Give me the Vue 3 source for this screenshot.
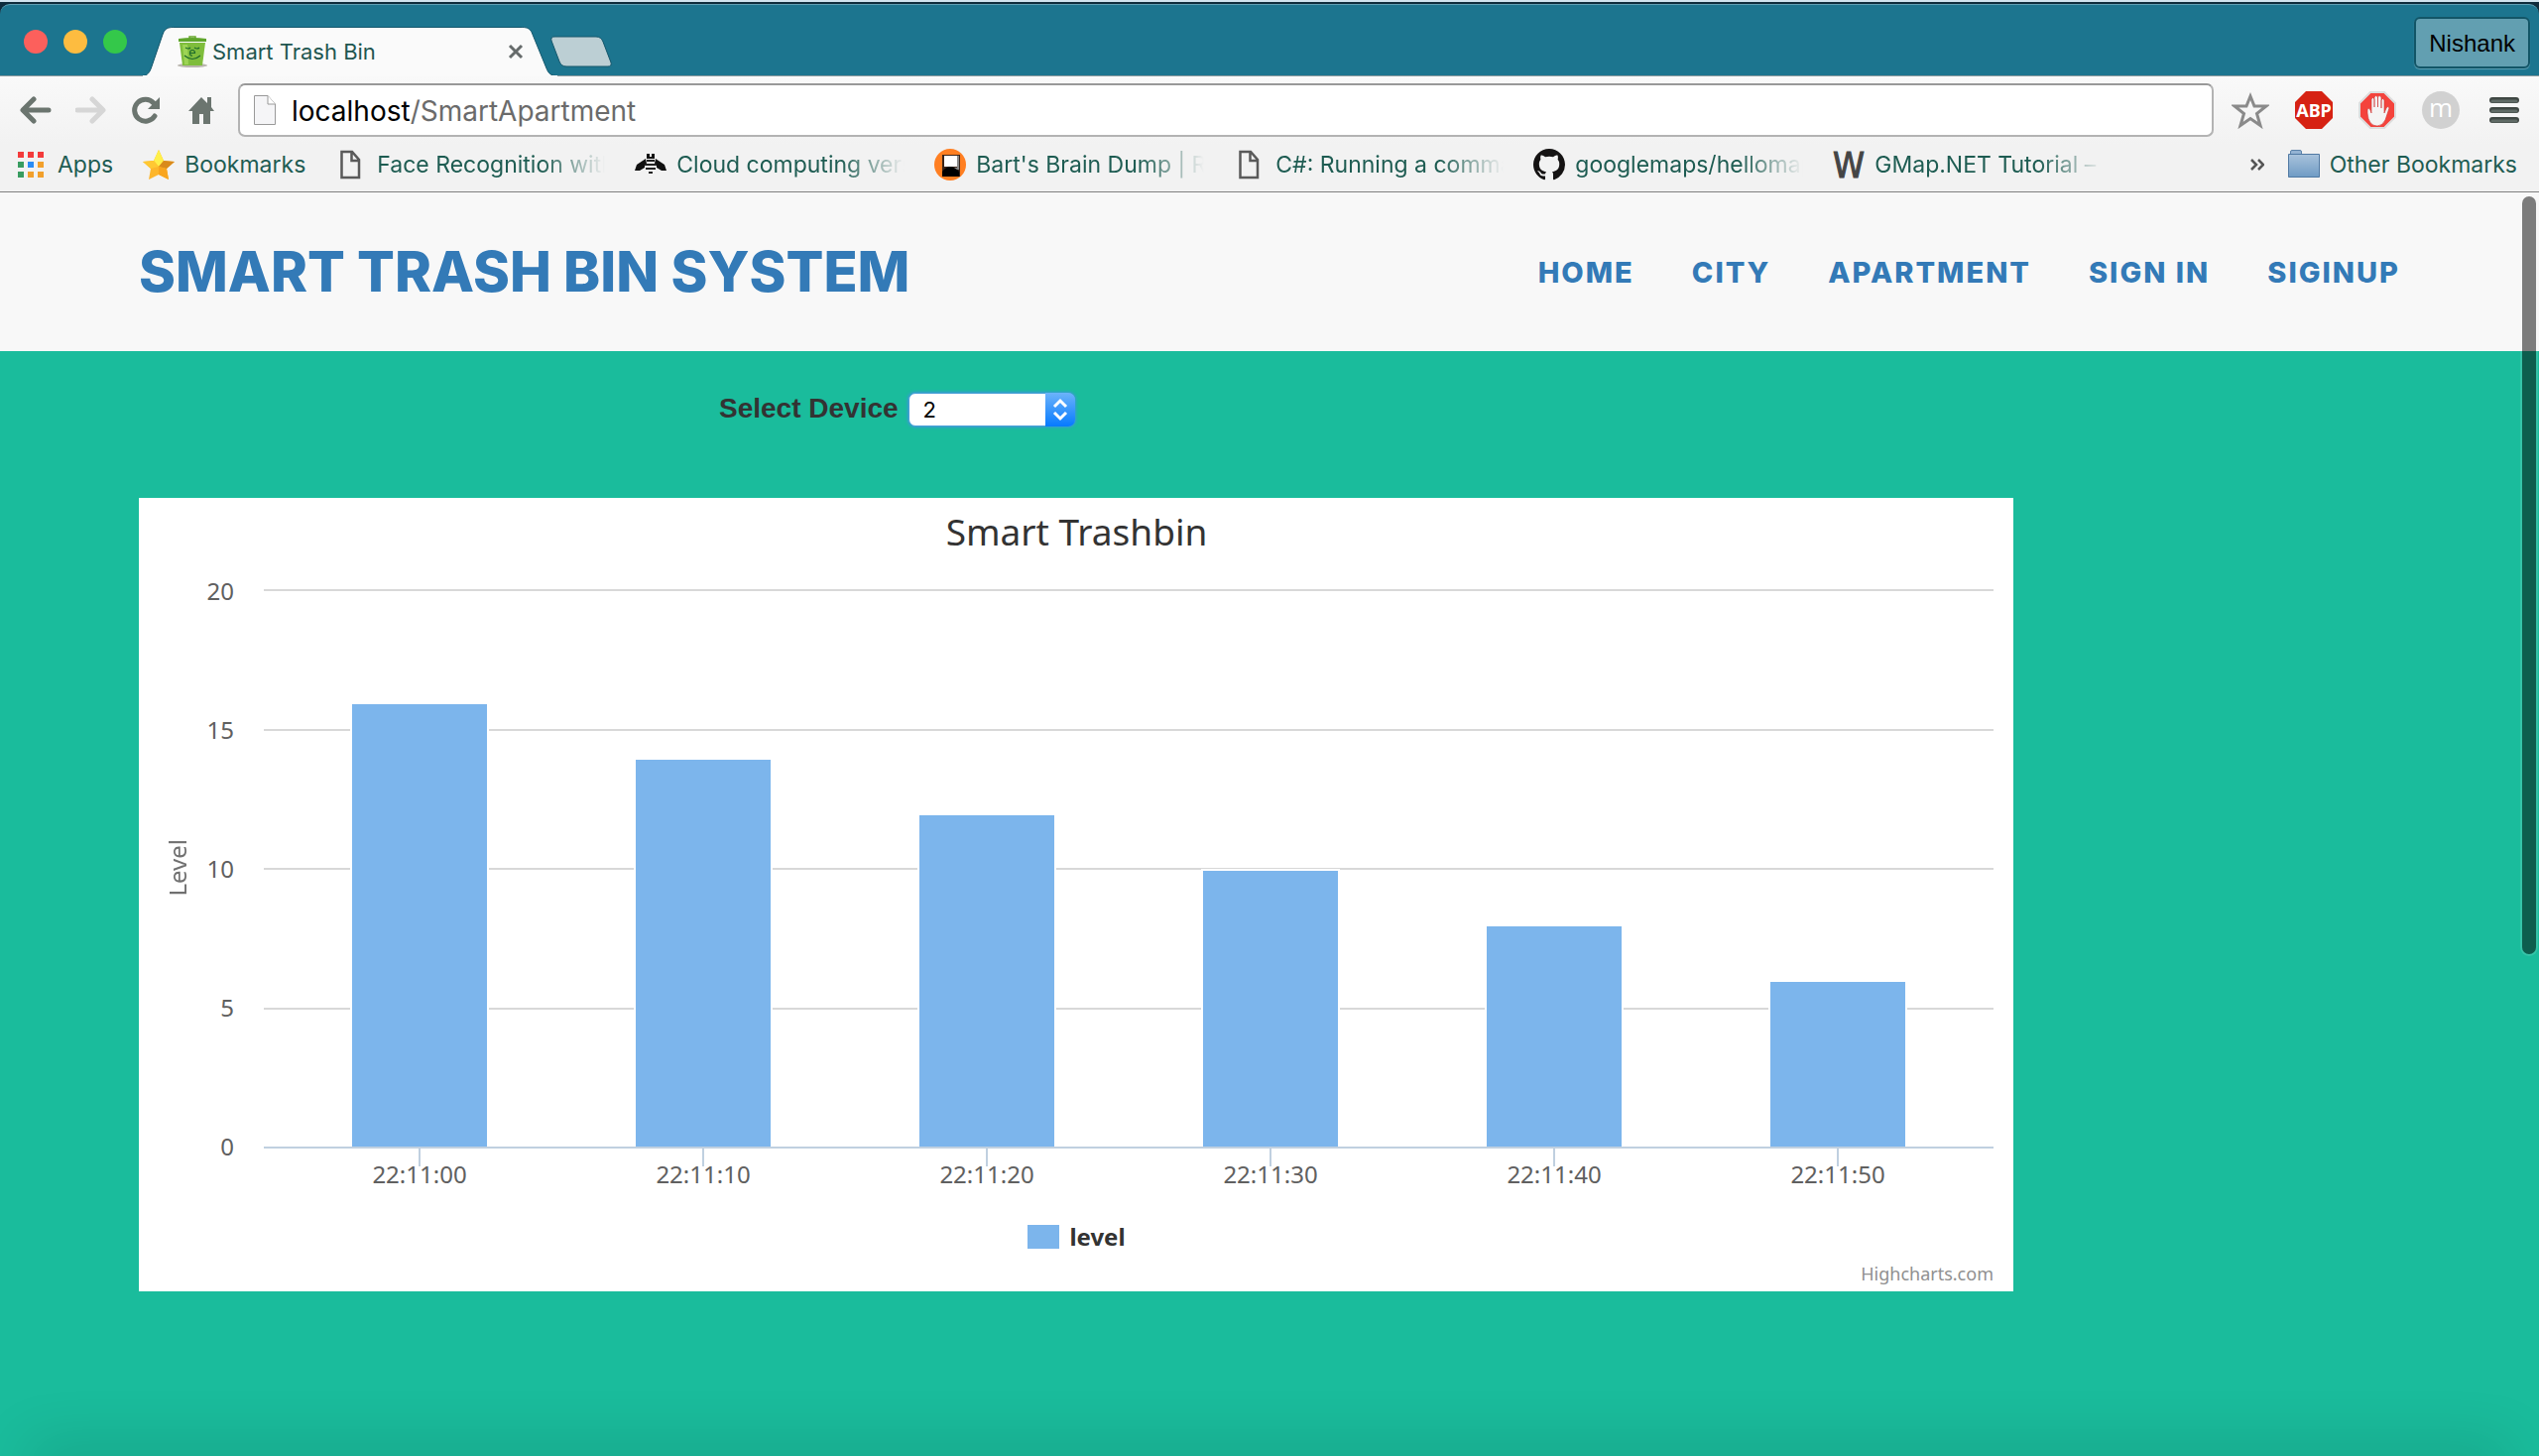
<script setup>
import { ref } from 'vue'

const device = ref('2')
const address = ref('localhost/SmartApartment')

const links = ['Home', 'City', 'Apartment', 'Sign in', 'Siginup']

const bookmarks = [
  { icon: 'apps', label: 'Apps' },
  { icon: 'star', label: 'Bookmarks' },
  { icon: 'file', label: 'Face Recognition with', clipped: true },
  { icon: 'bee', label: 'Cloud computing vers', clipped: true },
  { icon: 'bart', label: "Bart's Brain Dump | R", clipped: true },
  { icon: 'file', label: 'C#: Running a comma', clipped: true },
  { icon: 'github', label: 'googlemaps/hellomap', clipped: true },
  { icon: 'w', label: 'GMap.NET Tutorial –', clipped: true },
]

const appColors = ['#f33b3b', '#f33b3b', '#f33b3b', '#389c60', '#2a8cf5', '#f2a02c', '#389c60', '#f2a02c', '#f2a02c']

const maxLevel = 20
const ticks = [20, 15, 10, 5, 0]
const readings = [
  { time: '22:11:00', level: 16 },
  { time: '22:11:10', level: 14 },
  { time: '22:11:20', level: 12 },
  { time: '22:11:30', level: 10 },
  { time: '22:11:40', level: 8 },
  { time: '22:11:50', level: 6 },
]
</script>

<template>
  <div class="window">
    <div class="edge"></div>
    <div class="titlebar">
      <div class="lights"><i class="red"></i><i class="amber"></i><i class="green"></i></div>
      <div class="tab">
        <svg class="tab-shape" viewBox="0 0 420 50" preserveAspectRatio="none" aria-hidden="true">
          <path d="M0 49.500C5 49 7 46 9 40L20 8C22 2 25 .5 31 .5H384C390 .5 393 2 395 8L409 42C411 47 413 49 419 49.500Z" fill="#fafafa" stroke="#14566b" />
          <path d="M0 50H420" stroke="#fafafa" stroke-width="2" />
        </svg>
        <svg class="favicon" viewBox="0 0 32 32" aria-hidden="true">
          <ellipse cx="16" cy="30" rx="15" ry="2" fill="#b9b5ae" />
          <path d="M13 1h6v3h-6z" fill="none" stroke="#68a82c" stroke-width="1.500" />
          <path d="M3 7h26l-3 23H6z" fill="#7fbd3c" />
          <path d="M6 9h5l1 20H8z" fill="#9dd455" />
          <path d="M2 3q14-2 28 0v3H2z" fill="#5fa52b" />
          <path d="M9 12q3 2 5 0M18 12q3 2 5 0M8 20q8 7 16 0M13.500 17.500h5q0-3-2.500-3t-2.500 3 2.500 2.500" fill="none" stroke="#1e6a2c" stroke-width="1.200" />
        </svg>
        <span class="tab-title">Smart Trash Bin</span>
        <button class="close" aria-label="Close tab">
          <svg viewBox="0 0 16 16" width="16" height="16"><path d="M2 2l12 12M14 2L2 14" stroke="#666b6b" stroke-width="3" /></svg>
        </button>
      </div>
      <button class="newtab" aria-label="New tab">
        <svg viewBox="0 0 64 32" width="64" height="32"><path d="M5 1H47Q52 1 54 6L62 27Q63 31 59 31H17Q12 31 10 26L2 5Q1 1 5 1Z" fill="#bccfd4" stroke="#14566b" /></svg>
      </button>
      <button class="profile">Nishank</button>
    </div>

    <div class="toolbar">
      <div class="nav-row">
        <div class="nav-buttons">
          <button aria-label="Back"><svg viewBox="0 0 32 28"><path d="M29 14H4M14 3L3 14 14 25" class="stroke" /></svg></button>
          <button aria-label="Forward"><svg viewBox="0 0 32 28"><path d="M2 14H27M17 3L28 14 17 25" class="stroke off" /></svg></button>
          <button aria-label="Reload"><svg viewBox="0 0 32 28"><path d="M24 20A11 11 0 1 1 23 7" fill="none" stroke="#6b756f" stroke-width="5" stroke-linecap="round" /><path d="M29 1V13H17Z" fill="#6b756f" /></svg></button>
          <button aria-label="Home"><svg viewBox="0 0 32 28"><path d="M15 1L2 15H6V28H13V18H17V28H24V15H28L25 11V1H21V7Z" fill="#6b756f" /></svg></button>
        </div>
        <div class="address">
          <svg class="address-icon" viewBox="0 0 22 30" aria-hidden="true"><path d="M.5 .5H14L21.500 9V29.500H.5Z" fill="#f5f5f7" stroke="#999" /><path d="M14 .5V9H21.500" fill="#fff" stroke="#999" /></svg>
          <div class="address-text">
            <input id="address" v-model="address" aria-label="Address" spellcheck="false">
            <span aria-hidden="true"><b>localhost</b>/SmartApartment</span>
          </div>
        </div>
        <div class="extensions">
          <button aria-label="Bookmark this page"><svg viewBox="0 0 38 38"><path d="M19 5L23 15H35L25.500 22.500 29 34.500 19 27.500 9 34.500 12.500 22.500 3 15H15Z" fill="none" stroke="#8a8a8a" stroke-width="3" /></svg></button>
          <button aria-label="Adblock Plus"><svg viewBox="0 0 38 38"><path d="M11 0H27L38 11V27L27 38H11L0 27V11Z" fill="#d62213" /><text x="19" y="26" text-anchor="middle" class="abp">ABP</text></svg></button>
          <button aria-label="AdBlock">
            <svg viewBox="0 0 38 38"><path d="M12 1H26L37 12V26L26 37H12L1 26V12Z" fill="#f4433c" stroke="#ddd" stroke-width="2" /><path d="M9 18q2-2 3 1l1 3V8q1.500-3 3 0v8V6q1.500-3 3.500 0v10V6q1.500-3 3.500 0v11V9q1.500-3 3 0v13l2-5q2-3 3 0l-4 12q-3 6-8 6-9 0-10-13z" fill="#f4f4f4" stroke="#c33" stroke-width=".6" /></svg>
          </button>
          <button aria-label="m"><svg viewBox="0 0 38 38"><circle cx="19" cy="19" r="19" fill="#d1d1d1" /><text x="19" y="26" text-anchor="middle" class="em">m</text></svg></button>
          <button aria-label="Menu"><svg viewBox="0 0 38 38"><path d="M7 9H31M7 19H31M7 29H31" stroke="#3f4743" stroke-width="6" stroke-linecap="round" /><path d="M7 10H31M7 20H31M7 30H31" stroke="#606b66" stroke-width="3" stroke-linecap="round" /></svg></button>
        </div>
      </div>

      <nav class="bookmarks" aria-label="Bookmarks bar">
        <a v-for="item in bookmarks" :key="item.label" href="#" class="bookmark">
          <svg v-if="item.icon === 'apps'" class="apps-icon" viewBox="0 0 26 26">
            <rect v-for="(color, i) in appColors" :key="i" :x="(i % 3) * 10" :y="Math.floor(i / 3) * 10" width="6" height="6" :fill="color" />
          </svg>
          <svg v-else-if="item.icon === 'star'" viewBox="0 0 32 32">
            <path d="M16 1L21 12 32 13 24 20 26 31 16 26 6 31 8 20 0 13 11 12Z" fill="#fdb62c" />
            <path d="M16 1L21 12 16 18 11 12Z" fill="#fff04a" /><path d="M0 13L11 12 16 18 8 20Z" fill="#ffc833" /><path d="M32 13L24 20 16 18 21 12Z" fill="#d98a1c" /><path d="M16 18L24 20 26 31 16 26Z" fill="#f9a51f" />
          </svg>
          <svg v-else-if="item.icon === 'file'" viewBox="0 0 32 32"><path d="M6.500 3H17L24 11V29H6.500ZM16.500 3V12H24" fill="none" stroke="#5a5a5a" stroke-width="2.500" /></svg>
          <svg v-else-if="item.icon === 'bee'" viewBox="0 0 32 32">
            <path d="M12 5h3v3h2V5h3v5h-8z" fill="#111" />
            <path d="M11 10L2 16 0 22H5L10 19V15H12ZM21 10L30 16 32 22H27L22 19V15H20Z" fill="#111" />
            <path d="M12 12H20M10 16H22M11 20H21M14 24H18" stroke="#222" stroke-width="2" />
          </svg>
          <svg v-else-if="item.icon === 'bart'" viewBox="0 0 32 32">
            <circle cx="16" cy="16" r="16" fill="#ff7f22" /><path d="M8 6H26V28H8Z" fill="#3a2418" /><rect x="10" y="7" width="14" height="11" fill="#fff" /><path d="M24 7V20H19" fill="none" stroke="#888" stroke-width="2" /><path d="M8 28V23Q12 18 16 18T25 23V28Z" fill="#000" />
          </svg>
          <svg v-else-if="item.icon === 'github'" viewBox="0 0 16 16">
            <path fill="#151313" d="M8 0C3.580 0 0 3.580 0 8c0 3.540 2.290 6.530 5.470 7.590.4.070.55-.17.55-.38 0-.19-.01-.82-.01-1.490-2.010.37-2.530-.49-2.690-.94-.09-.23-.48-.94-.82-1.130-.28-.15-.68-.52-.01-.53.63-.01 1.080.58 1.230.82.72 1.210 1.870.87 2.330.66.07-.52.28-.87.51-1.070-1.780-.2-3.640-.89-3.640-3.950 0-.87.31-1.590.82-2.150-.08-.2-.36-1.020.08-2.120 0 0 .67-.21 2.200.82.64-.18 1.320-.27 2-.27s1.360.09 2 .27c1.530-1.040 2.200-.82 2.200-.82.44 1.100.16 1.920.08 2.120.51.56.82 1.270.82 2.150 0 3.070-1.870 3.750-3.650 3.950.29.25.54.73.54 1.480 0 1.070-.01 1.930-.01 2.200 0 .21.15.46.55.38A8.010 8.010 0 0 0 16 8c0-4.420-3.580-8-8-8z" />
          </svg>
          <svg v-else viewBox="0 0 32 32"><text x="16" y="29" text-anchor="middle" class="w-mark">W</text></svg>
          <span :class="{ clipped: item.clipped }">{{ item.label }}</span>
        </a>
        <button class="more" aria-label="More bookmarks"><svg viewBox="0 0 14 12" width="14" height="12"><path d="M1 1L6 6 1 11M8 1L13 6 8 11" fill="none" stroke="#555" stroke-width="2.500" /></svg></button>
        <a href="#" class="bookmark">
          <svg viewBox="0 0 32 32">
            <defs><linearGradient id="folder" x1="0" y1="0" x2="0" y2="1"><stop offset="0" stop-color="#a9c3dc" /><stop offset="1" stop-color="#6f9bc4" /></linearGradient></defs>
            <path d="M2.500 6V3Q2.500 1.500 4 1.500H12Q13.500 1.500 13.500 3V6" fill="#94b3d3" stroke="#5c83aa" /><path d="M.5 5.500H31.500V28.500H.5Z" fill="url(#folder)" stroke="#5079a3" />
          </svg>
          <span>Other Bookmarks</span>
        </a>
      </nav>
    </div>

    <main class="page">
      <header class="site-header">
        <a class="brand" href="#">Smart Trash Bin System</a>
        <nav class="site-nav" aria-label="Main">
          <a v-for="link in links" :key="link" href="#">{{ link }}</a>
        </nav>
      </header>

      <section class="content">
        <div class="device">
          <label for="device">Select Device</label>
          <div class="select">
            <select id="device" v-model="device">
              <option>1</option>
              <option>2</option>
              <option>3</option>
            </select>
            <svg viewBox="0 0 30 34" aria-hidden="true"><path d="M9 14L15 8 21 14M9 20L15 26 21 20" fill="none" stroke="#fff" stroke-width="3" /></svg>
          </div>
        </div>

        <figure class="chart">
          <figcaption>Smart Trashbin</figcaption>
          <div class="chart-body">
            <div class="axis-title"><span>Level</span></div>
            <div class="scale"><span v-for="tick in ticks" :key="tick">{{ tick }}</span></div>
            <div class="plot">
              <div class="grid"><i v-for="tick in ticks" :key="tick"></i></div>
              <div class="bars">
                <div v-for="r in readings" :key="r.time" class="slot">
                  <div class="bar" :style="{ height: (r.level / maxLevel) * 100 + '%' }"></div>
                </div>
              </div>
              <div class="times"><span v-for="r in readings" :key="r.time">{{ r.time }}</span></div>
            </div>
          </div>
          <div class="legend"><i></i><span>level</span></div>
          <div class="credits"><a href="#">Highcharts.com</a></div>
        </figure>
      </section>
      <div class="scrollbar"></div>
      <div class="dock-shadow"></div>
    </main>
  </div>
</template>

<style>
body {
  margin: 0;
}
</style>

<style scoped>
* {
  box-sizing: border-box;
}

a {
  color: inherit;
  text-decoration: none;
}

button {
  padding: 0;
  border: 0;
  background: none;
  font: inherit;
}

svg {
  display: block;
}

.window {
  display: flex;
  flex-direction: column;
  min-height: 100vh;
  overflow: hidden;
  background: #0e2c3c;
  font-family: Inter, "Liberation Sans", sans-serif;
}

.edge {
  height: 4px;
  border-top: 2px solid #cfe3ee;
}

/* Title bar */
.titlebar {
  display: flex;
  align-items: flex-end;
  height: 73px;
  padding: 0 9px 0 24px;
  border-top: 1px solid #5fa0b4;
  border-bottom: 1px solid #8a9a9e;
  border-radius: 10px 10px 0 0;
  background: #1c758f;
}

.lights {
  display: flex;
  gap: 16px;
  margin-bottom: 22px;
}

.lights i {
  width: 24px;
  height: 24px;
  border-radius: 50%;
}

.red {
  background: #fc605c;
}

.amber {
  background: #fdbc40;
}

.green {
  background: #34c84a;
}

.tab {
  position: relative;
  display: flex;
  align-items: center;
  width: 418px;
  height: 50px;
  margin: 0 0 -1px 16px;
  padding: 0 34px;
}

.tab-shape {
  position: absolute;
  inset: 0;
  width: 100%;
  height: 100%;
}

.favicon {
  position: relative;
  width: 32px;
  height: 32px;
}

.tab-title {
  position: relative;
  flex: 1;
  margin-left: 4px;
  color: #1f5650;
  font-size: 22px;
}

.close {
  position: relative;
}

.newtab {
  margin: 0 auto 8px -8px;
}

.profile {
  height: 52px;
  margin-bottom: 7px;
  padding: 2px 13px 0;
  border: 2px solid #125567;
  border-radius: 6px;
  background: #629fb1;
  box-shadow: 0 1px 1px #5fa0b4;
  color: #000;
  font: 24px "Liberation Sans", sans-serif;
}

/* Toolbar */
.toolbar {
  height: 117px;
  padding-top: 7px;
  border-bottom: 1px solid #808080;
  background: linear-gradient(#f9f9f9, #f2f2f2 60%);
}

.nav-row {
  display: flex;
  align-items: center;
  height: 54px;
  padding-right: 16px;
}

.nav-buttons {
  display: flex;
  gap: 24px;
  padding: 0 20px 0 20px;
}

.nav-buttons svg {
  width: 32px;
  height: 28px;
}

.stroke {
  fill: none;
  stroke: #6b756f;
  stroke-width: 5;
  stroke-linecap: round;
  stroke-linejoin: round;
}

.stroke.off {
  stroke: #d6d6d6;
}

.address {
  display: flex;
  flex: 1;
  align-items: center;
  height: 54px;
  border: 2px solid #b3b3b3;
  border-top-color: #999;
  border-radius: 7px;
  background: #fff;
}

.address-icon {
  width: 22px;
  height: 30px;
  margin: 0 16px 0 14px;
}

.address-text {
  position: relative;
  flex: 1;
  padding-top: 2px;
  color: #6b6b6b;
  font-size: 28px;
  line-height: 34px;
}

.address-text input {
  position: absolute;
  inset: 0;
  width: 100%;
  padding: 0;
  border: 0;
  outline: 0;
  background: none;
  color: transparent;
  font: inherit;
}

.address-text b {
  color: #000;
  font-weight: 400;
}

.extensions {
  display: flex;
  gap: 26px;
  margin-left: 18px;
}

.extensions svg {
  width: 38px;
  height: 38px;
}

.abp {
  fill: #fff;
  font: 700 18px "Noto Sans", sans-serif;
}

.em {
  fill: #fff;
  font: 26px "Open Sans", sans-serif;
}

.bookmarks {
  display: flex;
  align-items: center;
  gap: 30px;
  height: 56px;
  padding: 0 22px 0 14px;
  color: #1e5c52;
  font-size: 23px;
  line-height: 32px;
}

.bookmark {
  display: flex;
  align-items: center;
  gap: 10px;
  white-space: nowrap;
}

.bookmark svg {
  flex: none;
  width: 32px;
  height: 32px;
}

.bookmark .apps-icon {
  width: 34px;
  height: 26px;
}

.clipped {
  width: 230px;
  overflow: hidden;
  -webkit-mask-image: linear-gradient(90deg, #000 72%, transparent);
  mask-image: linear-gradient(90deg, #000 72%, transparent);
}

.w-mark {
  fill: #444;
  stroke: #444;
  font: 36px "DejaVu Sans Condensed", "DejaVu Sans", sans-serif;
}

.more {
  margin: 0 -6px 0 auto;
}

/* Site */
.page {
  position: relative;
  display: flex;
  flex: 1;
  flex-direction: column;
  background: #1abc9c;
}

.site-header {
  display: flex;
  align-items: center;
  justify-content: space-between;
  height: 160px;
  padding: 0 140px;
  background: #f8f8f8;
  color: #337ab7;
  font-family: Inter, sans-serif;
  font-weight: 800;
  text-transform: uppercase;
}

.brand {
  font-size: 56px;
}

.site-nav {
  display: flex;
  gap: 58px;
  font-size: 29px;
  letter-spacing: 2px;
}

.content {
  padding: 38px 140px;
}

.device {
  display: flex;
  align-items: center;
  gap: 10px;
  margin-left: calc(25% + 15px);
  color: #333;
  font: 700 28px/40px "Liberation Sans", Arial, sans-serif;
}

.select {
  position: relative;
  display: flex;
  margin-top: 2px;
}

.select select {
  width: 168px;
  height: 34px;
  padding: 0 44px 0 14px;
  border: 1px solid #4a9fd8;
  border-radius: 7px;
  outline: 0;
  appearance: none;
  background: #fff;
  box-shadow: 0 0 3px 1px #3b99d8;
  color: #000;
  font: 22px Inter, sans-serif;
}

.select svg {
  position: absolute;
  top: 0;
  right: 0;
  width: 30px;
  height: 34px;
  border-radius: 0 7px 7px 0;
  background: linear-gradient(#6cb3fa, #067aff);
  pointer-events: none;
}

/* Chart */
.chart {
  width: calc(83.3333% - 10px);
  margin: 70px 0 0;
  padding: 10px 20px 0 25px;
  background: #fff;
  color: #606060;
  font: 24px/28px "Noto Sans", sans-serif;
}

figcaption {
  height: 82px;
  padding-right: 4px;
  color: #333;
  font-size: 37px;
  line-height: 48px;
  text-align: center;
}

.chart-body {
  display: flex;
}

.axis-title {
  display: flex;
  align-items: center;
  justify-content: center;
  width: 28px;
  height: 562px;
  color: #707070;
}

.axis-title span {
  writing-mode: vertical-rl;
  transform: rotate(180deg);
}

.scale {
  display: flex;
  flex-direction: column;
  justify-content: space-between;
  width: 43px;
  height: 588px;
  margin: -12px 30px 0 0;
  text-align: right;
}

.plot {
  position: relative;
  flex: 1;
}

.grid {
  display: flex;
  flex-direction: column;
  justify-content: space-between;
  height: 564px;
}

.grid i {
  height: 2px;
  background: #d8d8d8;
}

.grid i:last-child {
  background: #c0d0e0;
}

.bars {
  position: absolute;
  top: 2px;
  right: 0;
  left: 0;
  display: flex;
  height: 560px;
  padding: 0 14px;
}

.slot {
  display: flex;
  flex: 1;
  align-items: flex-end;
  justify-content: center;
}

.bar {
  width: 140px;
  border: 2px solid #fff;
  border-bottom: 0;
  background: #7cb5ec;
}

.times {
  display: flex;
  padding: 0 14px;
}

.times span {
  display: flex;
  flex: 1;
  flex-direction: column;
  align-items: center;
}

.times span::before {
  width: 2px;
  height: 18px;
  margin-bottom: -6px;
  background: #c0d0e0;
  content: "";
}

.legend {
  display: flex;
  align-items: center;
  justify-content: center;
  gap: 10px;
  height: 28px;
  margin-top: 35px;
  padding-right: 4px;
  color: #333;
  font-weight: 700;
}

.legend i {
  width: 32px;
  height: 24px;
  background: #7cb5ec;
}

.credits {
  padding: 11px 0 6px;
  color: #909090;
  font-size: 18px;
  line-height: 24px;
  text-align: right;
}

.scrollbar {
  position: absolute;
  top: 4px;
  right: 3px;
  width: 14px;
  height: 60%;
  border-radius: 7px;
  background: rgba(0, 0, 0, 0.5);
  box-shadow: 0 0 0 2px rgba(255, 255, 255, 0.12);
}

.dock-shadow {
  position: absolute;
  right: 40px;
  bottom: -20px;
  left: 40px;
  height: 20px;
  box-shadow: 0 0 60px 10px rgba(0, 0, 0, 0.15);
}
</style>
